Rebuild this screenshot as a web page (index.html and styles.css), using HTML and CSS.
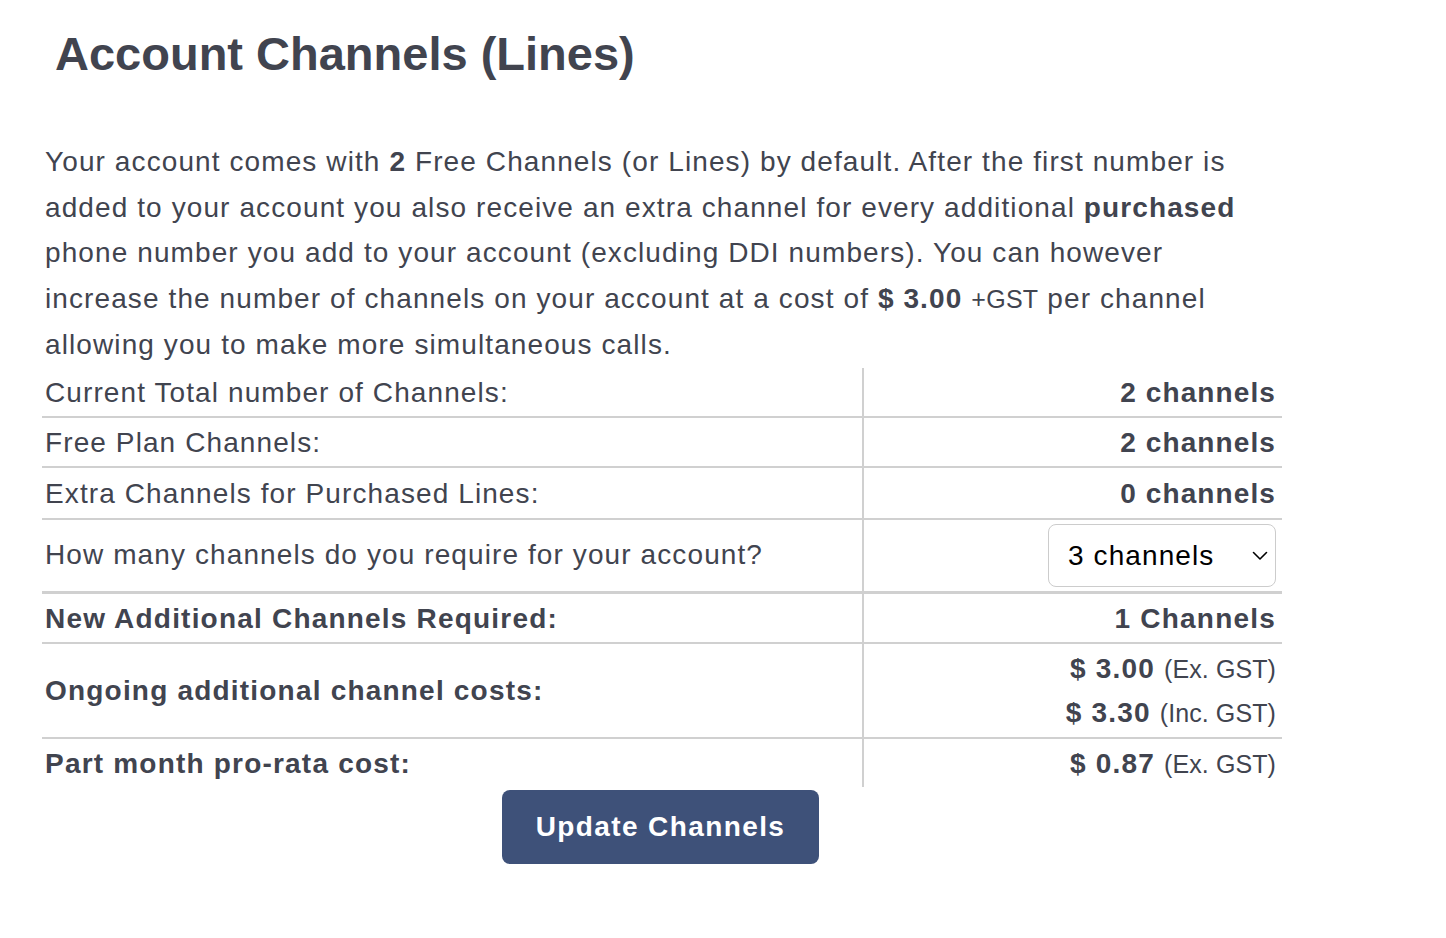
FILE: index.html
```html
<!DOCTYPE html>
<html>
<head>
    <title>Account Channels</title>
    <link rel="stylesheet" href="styles.css">
</head>
<body>

<div class="page">
    <h1 class="pageTitle">Account Channels (Lines)</h1>

    <p class="intro">
        Your account comes with <b>2</b> Free Channels (or Lines) by default. After the first number is
        added to your account you also receive an extra channel for every additional <b>purchased</b>
        phone number you add to your account (excluding DDI numbers). You can however
        increase the number of channels on your account at a cost of <b>$ 3.00</b> <span class="small">+GST</span> per channel
        allowing you to make more simultaneous calls.
    </p>

    <form onsubmit="event.preventDefault();">
        <table class="channelTable">
            <tbody>
                <tr>
                    <td class="label">Current Total number of Channels:</td>
                    <td class="value"><b>2 channels</b></td>
                </tr>
                <tr>
                    <td class="label">Free Plan Channels:</td>
                    <td class="value"><b>2 channels</b></td>
                </tr>
                <tr class="tall">
                    <td class="label">Extra Channels for Purchased Lines:</td>
                    <td class="value"><b>0 channels</b></td>
                </tr>
                <tr class="selectRow">
                    <td class="label">How many channels do you require for your account?</td>
                    <td class="value">
                        <div class="selectWrap">
                            <select class="channelSelect">
                                <option>2 channels</option>
                                <option selected>3 channels</option>
                                <option>4 channels</option>
                                <option>5 channels</option>
                            </select>
                            <svg class="chevron" width="16" height="10" viewBox="0 0 16 10">
                                <path d="M1.5 1.5 L8 8 L14.5 1.5" fill="none" stroke="#000" stroke-width="1.6" stroke-linecap="round" stroke-linejoin="round"/>
                            </svg>
                        </div>
                    </td>
                </tr>
                <tr class="strong">
                    <td class="label">New Additional Channels Required:</td>
                    <td class="value">1 Channels</td>
                </tr>
                <tr class="strong">
                    <td class="label">Ongoing additional channel costs:</td>
                    <td class="value">
                        <div class="price"><b>$ 3.00</b> <span class="gst">(Ex. GST)</span></div>
                        <div class="price"><b>$ 3.30</b> <span class="gst">(Inc. GST)</span></div>
                    </td>
                </tr>
                <tr class="strong last">
                    <td class="label">Part month pro-rata cost:</td>
                    <td class="value"><b>$ 0.87</b> <span class="gst">(Ex. GST)</span></td>
                </tr>
            </tbody>
        </table>

        <div class="actions">
            <button type="submit" class="updateBtn">Update Channels</button>
        </div>
    </form>
</div>

</body>
</html>
```

FILE: styles.css
```css
body {
    font-family: "Liberation Sans", Arial, sans-serif;
    color: #41444f;
    background-color: #ffffff;
    margin: 0;
    padding: 0;
}
.page {
    width: 1240px;
    padding: 0 0 0 42px;
}
.pageTitle {
    font-size: 47px;
    font-weight: bold;
    margin: 26px 0 0 13px;
    line-height: 56px;
}
.intro {
    font-size: 28px;
    line-height: 45.5px;
    letter-spacing: 1.1px;
    margin: 57px 0 0 0;
    padding: 0 3px;
}
.small {
    font-size: 25px;
    letter-spacing: 0.3px;
}
.channelTable {
    width: 100%;
    border-collapse: collapse;
    font-size: 28px;
    letter-spacing: 1.1px;
}
.channelTable td {
    padding: 3px 6px 1px 3px;
    line-height: 44px;
    border-bottom: 2px solid #d0d0d0;
}
.channelTable td.label {
    width: 811px;
    text-align: left;
    border-right: 2px solid #d0d0d0;
}
.channelTable td.value {
    text-align: right;
}
.tall td {
    padding-top: 4px;
    padding-bottom: 2px;
}
.selectRow td {
    padding-top: 4px;
    padding-bottom: 4px;
    border-bottom: 3px solid #d0d0d0 !important;
}
.strong td {
    font-weight: bold;
    letter-spacing: 1.2px;
}
.last td {
    border-bottom: none;
}
.price {
    line-height: 44.5px;
}
.gst {
    font-weight: normal;
    font-size: 25px;
    letter-spacing: 0.1px;
}
.selectWrap {
    position: relative;
    display: inline-block;
    vertical-align: middle;
}
.channelSelect {
    appearance: none;
    -webkit-appearance: none;
    width: 228px;
    height: 63px;
    padding: 0 0 0 19px;
    border: 1px solid #cccccc;
    border-radius: 8px;
    background-color: #ffffff;
    color: #000000;
    font-family: "Liberation Sans", Arial, sans-serif;
    font-size: 28px;
    letter-spacing: 1.1px;
    display: block;
}
.chevron {
    position: absolute;
    right: 8px;
    top: 27px;
    pointer-events: none;
}
.actions {
    text-align: center;
    padding-top: 3px;
}
.updateBtn {
    background-color: #3e5179;
    color: #ffffff;
    font-family: "Liberation Sans", Arial, sans-serif;
    font-size: 28px;
    font-weight: bold;
    letter-spacing: 1.4px;
    width: 317px;
    height: 74px;
    border: none;
    border-radius: 8px;
    cursor: pointer;
    margin-left: -3px;
}
```
